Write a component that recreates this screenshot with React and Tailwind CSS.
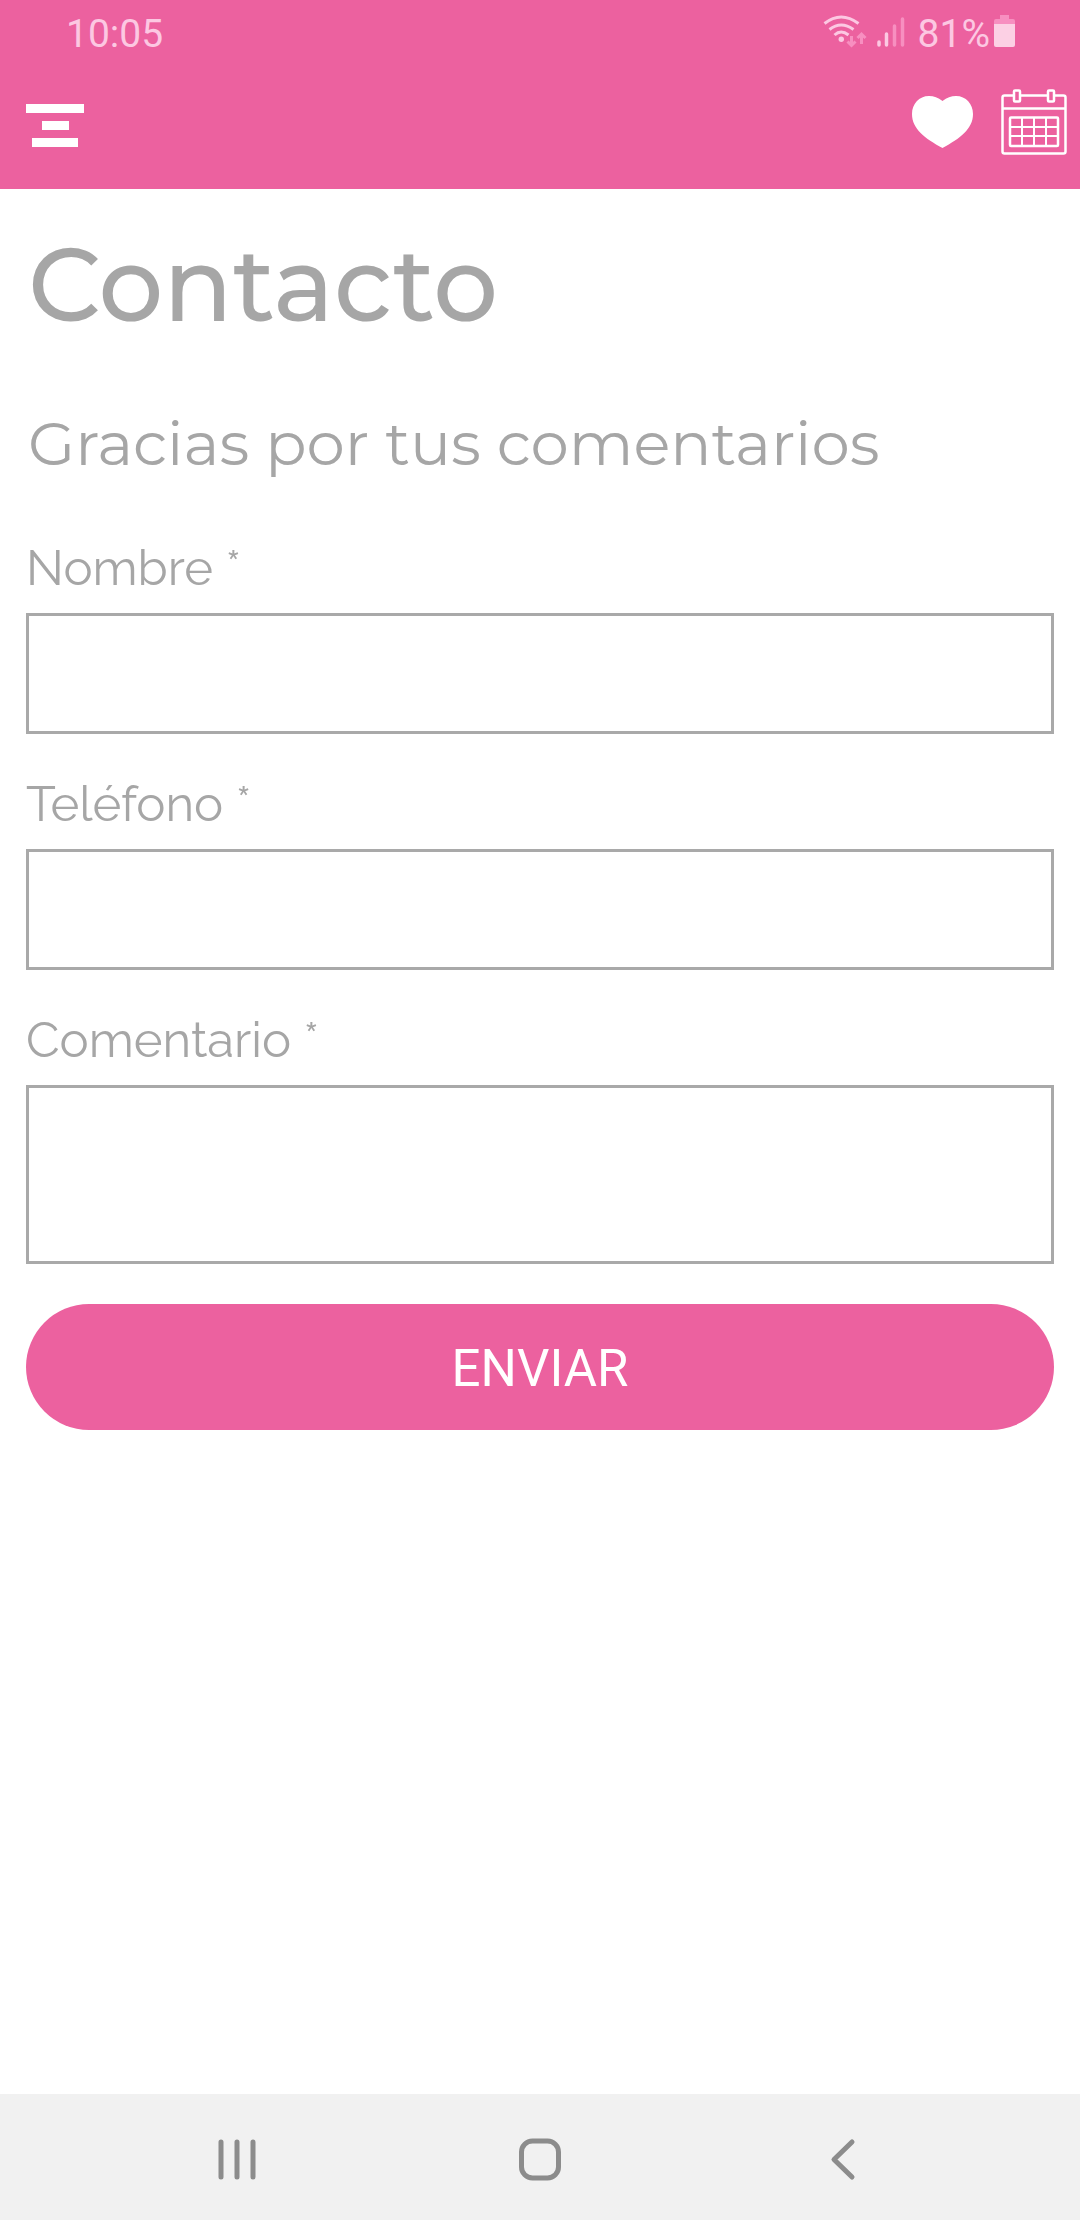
import { useState } from 'react';

const fields = [
  { name: 'nombre', label: 'Nombre', type: 'text' },
  { name: 'telefono', label: 'Teléfono', type: 'tel' },
  { name: 'comentario', label: 'Comentario', multiline: true },
];

const SignalIcons = () => (
  <svg width="84" height="36" viewBox="820 12 84 36" fill="none" aria-hidden="true">
    {/* Wifi */}
    <g stroke="#fcc8e2" strokeWidth="3">
      <path d="M822.500 21.500Q839 8.500 856.500 21.500" />
      <path d="M827.500 27.500Q839 18.500 851.500 27.500" />
      <path d="M832.500 33Q839 27 846.500 33" />
    </g>
    <circle cx="839.300" cy="37.300" r="2.700" fill="#fcc8e2" />
    {/* Data arrows */}
    <g stroke="#f78fc0" strokeWidth="3">
      <path d="M849.500 34v9M845.500 39.500l4 4 4-4" />
      <path d="M859.500 42v-9M855.500 36l4-4 4 4" />
    </g>
    {/* Signal bars */}
    <g strokeWidth="3.500" strokeLinecap="round">
      <path d="M877 40v3M884.500 32v11" stroke="#fcc8e2" />
      <path d="M892.500 24v19M900.500 17v26" stroke="#f78fc0" />
    </g>
  </svg>
);

const BatteryIcon = () => (
  <svg width="21" height="34" viewBox="0 0 21 34" aria-hidden="true">
    <path d="M0 11V6q0-2 2-2h4V0h9v4h4q2 0 2 2v5z" fill="#f78fc0" />
    <path d="M0 9h21v21q0 2-2 2H2q-2 0-2-2z" fill="#fcd0e4" />
  </svg>
);

const MenuIcon = () => (
  <svg width="58" height="66" viewBox="0 0 58 66" fill="#fff" aria-hidden="true">
    <path d="M0 15h58v9H0zM16 32h27v9H16zM6 49h46v9H6z" />
  </svg>
);

const HeartIcon = () => (
  <svg width="61" height="66" viewBox="0 0 61 66" fill="#fff" aria-hidden="true">
    <path d="M30.500 12C26 8.500 22 7 17 7 7 7 0 15 0 25c0 15 13 24.500 30.500 34C48 49.500 61 40 61 25 61 15 54 7 44 7c-5 0-9 1.500-13.500 5z" />
  </svg>
);

const CalendarIcon = () => (
  <svg width="66" height="66" viewBox="0 0 66 66" fill="none" stroke="#fff" strokeWidth="2.500" aria-hidden="true">
    <path d="M12.500 6.500H3.500q-2 0-2 2V62.500q0 2 2 2h59q2 0 2-2V8.500q0-2-2-2h-9M19.500 6.500h27M1.500 19.500h63" />
    <rect x="13" y="1.500" width="6" height="11" rx="1" />
    <rect x="47" y="1.500" width="6" height="11" rx="1" />
    <rect x="9" y="28.500" width="48" height="28.500" rx="1" />
    <path d="M9 38h48M9 47h48M21 28.500V57M33 28.500V57M45 28.500V57" strokeWidth="2" />
  </svg>
);

const StatusBar = () => (
  <div className="flex h-[63px] items-center justify-between pl-[66px] pr-[65px] text-[39px] leading-[60px] text-[#fcc8e2]">
    <span className="pt-1">10:05</span>
    <div className="flex items-center">
      <SignalIcons />
      <span className="ml-3 mr-1 pt-1">81%</span>
      <BatteryIcon />
    </div>
  </div>
);

const NavBar = () => (
  <nav className="flex h-[126px] items-center justify-around bg-[#f1f1f1] px-[84px] pt-1 text-[#8c8c8c]">
    <button type="button" aria-label="Recientes">
      <svg width="48" height="48" viewBox="0 0 48 48" fill="none" stroke="currentColor" strokeWidth="5" strokeLinecap="round">
        <path d="M9 7v35M25 7v35M41 7v35" />
      </svg>
    </button>
    <button type="button" aria-label="Inicio">
      <svg width="48" height="48" viewBox="0 0 48 48" fill="none" stroke="currentColor" strokeWidth="5">
        <rect x="5.500" y="6" width="37" height="37" rx="11" />
      </svg>
    </button>
    <button type="button" aria-label="Atrás">
      <svg width="48" height="48" viewBox="0 0 48 48" fill="none" stroke="currentColor" strokeWidth="5" strokeLinecap="round" strokeLinejoin="round">
        <path d="M32 7L14 24.500 32 42" />
      </svg>
    </button>
  </nav>
);

const Field = ({ field, value, onChange }) => {
  const boxClass = 'block w-full border-[3px] border-[#a9a9a9] bg-white px-4 text-[49px] outline-none';

  return (
    <div>
      <label htmlFor={field.name} className="block h-[75px] text-[49px] leading-[60px]">
        {field.label} *
      </label>
      {field.multiline ? (
        <textarea
          id={field.name}
          name={field.name}
          value={value}
          onChange={onChange}
          required
          className={`${boxClass} h-[179px] resize-none`}
        />
      ) : (
        <input
          id={field.name}
          name={field.name}
          type={field.type}
          value={value}
          onChange={onChange}
          required
          className={`${boxClass} h-[121px]`}
        />
      )}
    </div>
  );
};

const App = () => {
  const [form, setForm] = useState({ nombre: '', telefono: '', comentario: '' });

  const handleChange = (e) => {
    setForm({ ...form, [e.target.name]: e.target.value });
  };

  const handleSubmit = (e) => {
    e.preventDefault();
  };

  return (
    <div className="flex min-h-screen flex-col bg-white font-['Roboto',sans-serif]">
      <header className="bg-[#ec619f]">
        <StatusBar />
        <div className="flex h-[126px] items-center justify-between pb-2 pl-[26px] pr-[13px]">
          <button type="button" aria-label="Menú">
            <MenuIcon />
          </button>
          <div className="flex items-center gap-7">
            <button type="button" aria-label="Favoritos">
              <HeartIcon />
            </button>
            <button type="button" aria-label="Calendario">
              <CalendarIcon />
            </button>
          </div>
        </div>
      </header>

      <main className="flex-1 px-[26px] pt-9 text-[#a6a6a6]">
        <div className="pl-0.5 font-['Montserrat','Inter',sans-serif]">
          <h1 className="text-[102px] leading-[120px] font-medium">Contacto</h1>
          <h2 className="mt-[58px] text-[61px] leading-[80px]">Gracias por tus comentarios</h2>
        </div>

        <form onSubmit={handleSubmit} className="mt-[55px] font-['Raleway','Lato',sans-serif]">
          <div className="flex flex-col gap-10">
            {fields.map((field) => (
              <Field key={field.name} field={field} value={form[field.name]} onChange={handleChange} />
            ))}
          </div>
          <button
            type="submit"
            className="mt-10 h-[126px] w-full rounded-full bg-[#ec619f] pt-1 font-['Roboto',sans-serif] text-[51px] text-white"
          >
            ENVIAR
          </button>
        </form>
      </main>

      <NavBar />
    </div>
  );
};

export default App;
